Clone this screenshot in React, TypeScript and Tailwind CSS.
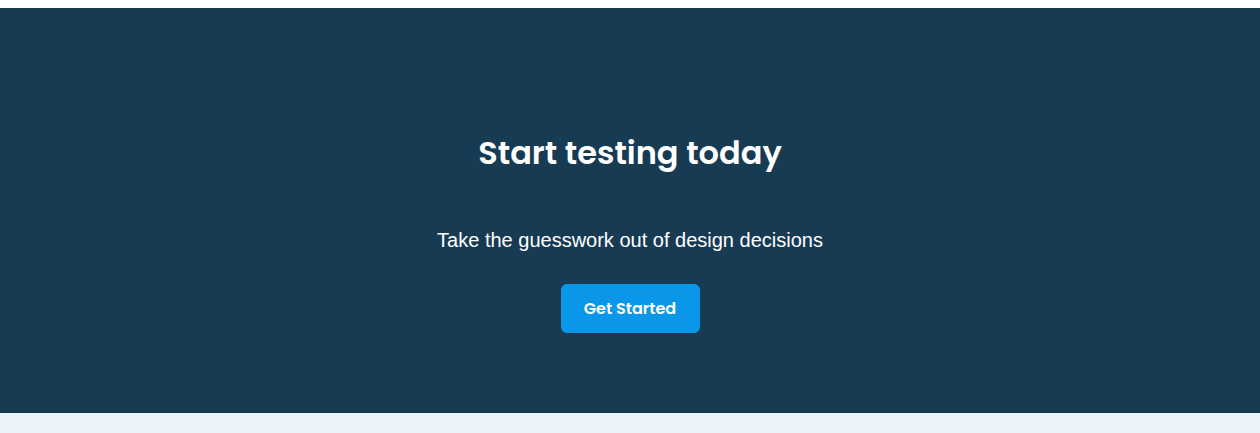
export default function App() {
  return (
    <main className="min-h-[433px] bg-[#eaf2fa]">
      <div className="h-2 bg-white" />
      <section className="flex h-[405px] flex-col items-center bg-[#183b54] pt-[125px] text-white">
        <h2
          className="text-[32px] font-semibold leading-[40px]"
          style={{ fontFamily: 'Poppins, Inter, "Open Sans", sans-serif' }}
        >
          Start testing today
        </h2>
        <p
          className="mt-[53px] text-[20px] leading-[28px]"
          style={{ fontFamily: '"Liberation Sans", Arial, sans-serif' }}
        >
          Take the guesswork out of design decisions
        </p>
        <button
          className="mt-[30px] h-[49px] w-[139px] rounded-md bg-[#0b97e7] text-[16px] font-semibold text-white"
          style={{ fontFamily: 'Poppins, Inter, "Open Sans", sans-serif' }}
        >
          Get Started
        </button>
      </section>
      <div className="h-5 bg-[#eaf2fa]" />
    </main>
  );
}
